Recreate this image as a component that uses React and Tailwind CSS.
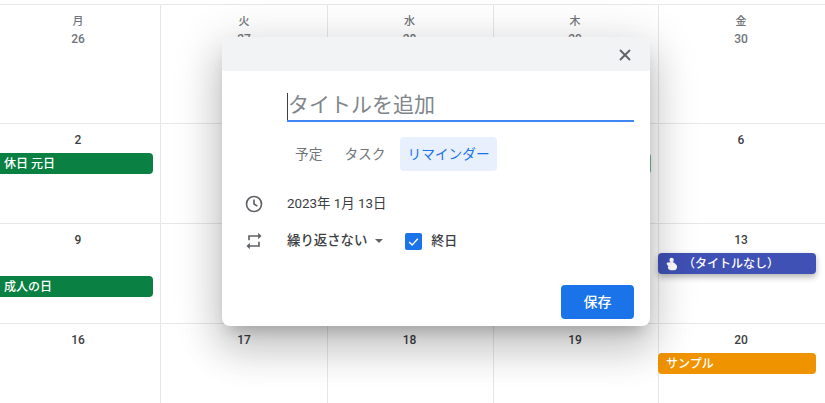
import React from "react";
import { X } from "lucide-react";

const FONT = { fontFamily: '"Roboto", "Noto Sans CJK JP", sans-serif' };

// row heights follow the grid lines in the screenshot
const ROWS = [
  [
    { day: "月", num: "26" },
    { day: "火", num: "27" },
    { day: "水", num: "28" },
    { day: "木", num: "29" },
    { day: "金", num: "30" },
  ],
  [{ num: "2" }, { num: "3" }, { num: "4" }, { num: "5" }, { num: "6" }],
  [{ num: "9" }, { num: "10" }, { num: "11" }, { num: "12" }, { num: "13" }],
  [{ num: "16" }, { num: "17" }, { num: "18" }, { num: "19" }, { num: "20" }],
];

function EventBar({ color, children, className = "" }) {
  return (
    <div className={`h-[21px] flex items-center rounded text-xs font-medium text-white whitespace-nowrap ${color} ${className}`}>
      {children}
    </div>
  );
}

function HandIcon() {
  return (
    <svg width="14" height="14" viewBox="0 0 14 14" className="ml-[7px] mr-[4px] shrink-0" fill="#fff">
      <circle cx="6.6" cy="3" r="2.2" />
      <path d="M2.6 5.4 7.4 5c2 .6 3.6 1.9 4.4 3.6.5 1.4.3 2.9-.8 3.8-.9.8-2.6 1-4.3.9-1.6-.1-3-.7-3.6-1.9-.4-.8-.3-1.5.2-2.2L1.7 7.3c-.3-.8.2-1.6.9-1.9Z" />
    </svg>
  );
}

function cellEvents(r, c) {
  if (r === 1 && c === 0) {
    return (
      <EventBar color="bg-[#0b8043]" className="mr-[7px] pl-1 rounded-l-none">
        休日 元日
      </EventBar>
    );
  }
  if (r === 1 && c === 3) {
    return <EventBar color="bg-[#0b8043]" className="mr-[7px] opacity-60" />;
  }
  if (r === 2 && c === 0) {
    return (
      <EventBar color="bg-[#0b8043]" className="mt-[29px] mr-[7px] pl-1 rounded-l-none">
        成人の日
      </EventBar>
    );
  }
  if (r === 2 && c === 4) {
    return (
      <EventBar color="bg-[#3f51b5] shadow-[0_3px_6px_rgba(0,0,0,0.3)]" className="mr-[9px] -ml-px">
        <HandIcon />
        （タイトルなし）
      </EventBar>
    );
  }
  if (r === 3 && c === 4) {
    return (
      <EventBar color="bg-[#f09300]" className="mr-[9px] -ml-px pl-2">
        サンプル
      </EventBar>
    );
  }
  return null;
}

function Calendar() {
  return (
    <div className="pt-1">
      {ROWS.map((row, r) => (
        <div
          key={r}
          className={`grid grid-cols-[161px_167px_166px_165px_166px] border-t border-[#e5e7e9] ${
            r === 0 ? "h-[119px]" : r === 3 ? "h-[80px]" : "h-[100px]"
          }`}
        >
          {row.map((cell, c) => {
            // labels sit a little left of the cell centre in these columns
            const nudge = c === 0 ? "pr-1" : c >= 2 ? "pr-[2px]" : "";
            return (
              <div key={c} className={c < 4 ? "border-r border-[#e5e7e9]" : ""}>
                {cell.day ? (
                  <div className={`h-[26px] pt-[10px] text-center text-[11px] leading-[13px] font-medium text-[#70757a] ${nudge}`}>{cell.day}</div>
                ) : null}
                <div
                  className={`text-center text-xs font-medium leading-[14px] ${
                    r === 0 ? "text-[#70757a] pt-[1px]" : "text-[#3c4043] pt-[9px]"
                  } ${nudge}`}
                >
                  {cell.num}
                </div>
                {r > 0 ? <div className="mt-[6px]">{cellEvents(r, c)}</div> : null}
              </div>
            );
          })}
        </div>
      ))}
    </div>
  );
}

function Dialog() {
  return (
    <div className="absolute left-[222px] top-[37px] w-[428px] h-[289px] rounded-lg bg-white overflow-hidden shadow-[0_24px_38px_3px_rgba(0,0,0,0.14),0_9px_46px_8px_rgba(0,0,0,0.12),0_11px_15px_-7px_rgba(0,0,0,0.2)]">
      <div className="h-[34px] pt-px bg-[#f1f3f4] flex items-center justify-end pr-4">
        <X size={18} strokeWidth={2.4} className="text-[#5f6368]" />
      </div>
      <div className="pl-[65px] pr-4">
        {/* title */}
        <div className="pt-[22px] border-b-2 border-[#4285f4]">
          <div className="border-l border-[#3c4043] h-[27px] text-[21px] leading-[25px] text-[#80868b]">タイトルを追加</div>
        </div>

        {/* tabs */}
        <div className="flex items-center mt-[15px] h-[34px] text-[13.7px] text-[#70757a]">
          <span className="ml-2">予定</span>
          <span className="ml-[22px]">タスク</span>
          <span className="ml-[15px] h-[34px] px-[7px] flex items-center rounded bg-[#e8f0fe] text-[#1a73e8]">リマインダー</span>
        </div>
      </div>

      {/* date */}
      <div className="flex items-center mt-[23px] h-[20px] text-[#3c4043]">
        <svg width="20" height="20" viewBox="0 0 24 24" fill="none" stroke="#5f6368" strokeWidth="2" className="ml-[22px]">
          <circle cx="12" cy="12" r="9" />
          <path d="M12 6.5V12l4 2.6" />
        </svg>
        <span className="ml-[23px] text-[13.4px]">2023年 1月 13日</span>
      </div>

      {/* repeat */}
      <div className="flex items-center mt-[17px] h-[20px] text-[#3c4043]">
        <svg width="20" height="20" viewBox="0 0 24 24" fill="#5f6368" className="ml-[22px]">
          <path d="M7 7h10v3l4-4-4-4v3H5v6h2V7zm10 10H7v-3l-4 4 4 4v-3h12v-6h-2v4z" />
        </svg>
        <span className="ml-[23px] text-[13.4px] font-medium">繰り返さない</span>
        <span className="ml-[8px] w-0 h-0 border-x-[4px] border-x-transparent border-t-[4px] border-t-[#5f6368]" />
        <span className="ml-[22px] w-[17px] h-[17px] rounded-[2px] bg-[#1a73e8] flex items-center justify-center">
          <svg width="13" height="13" viewBox="0 0 24 24" fill="none" stroke="#fff" strokeWidth="2.6">
            <path d="M4 13l5.5 5.5L20 7" />
          </svg>
        </span>
        <span className="ml-[9px] text-[13px] font-medium">終日</span>
      </div>

      <div className="flex justify-end mt-[34px] pr-4">
        <div className="w-[73px] h-[34px] rounded bg-[#1a73e8] text-sm font-medium text-white flex items-center justify-center">保存</div>
      </div>
    </div>
  );
}

export default function App() {
  return (
    <div className="relative w-[825px] h-[403px] overflow-hidden bg-white" style={FONT}>
      <Calendar />
      <Dialog />
    </div>
  );
}
